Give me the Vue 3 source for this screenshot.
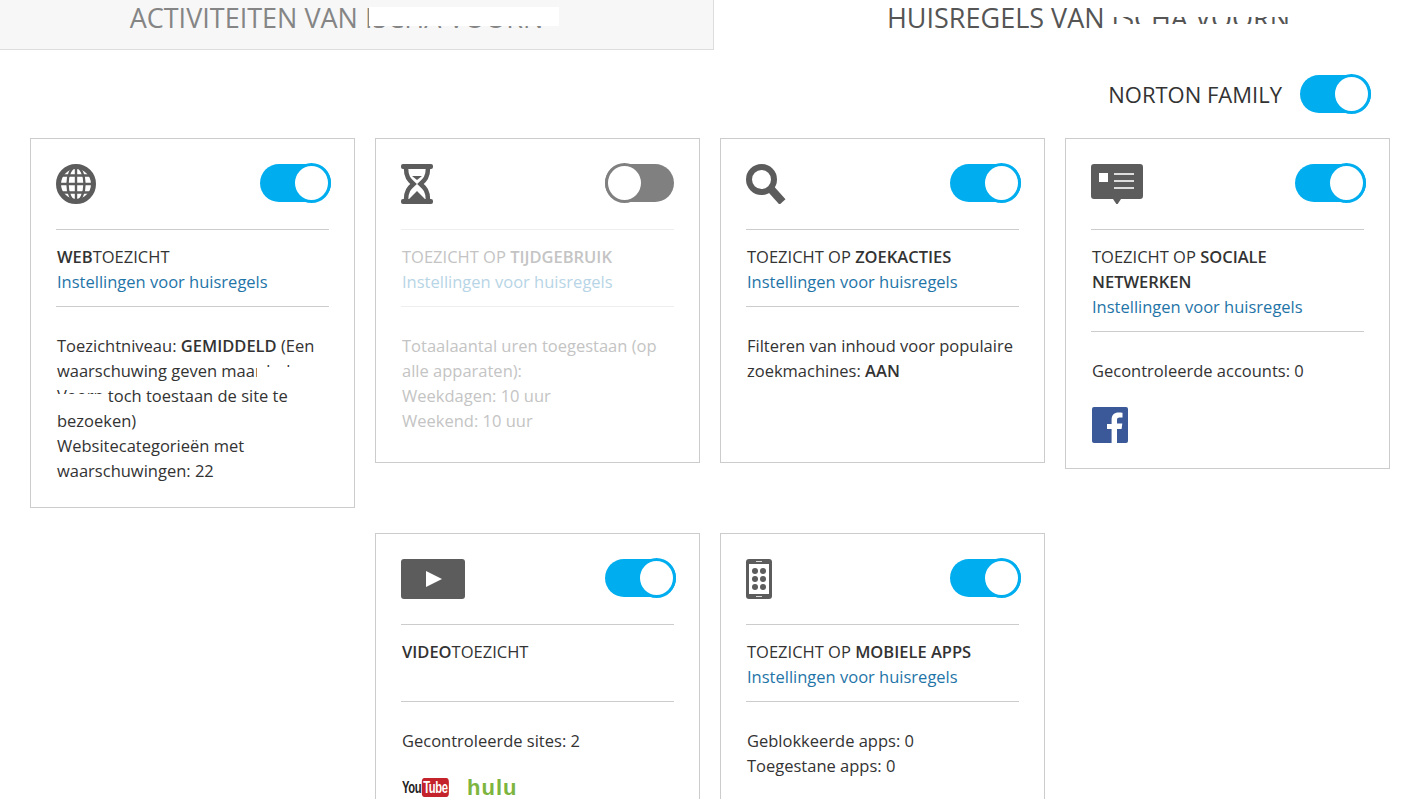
<template>
  <div class="page">
    <!-- Tabs -->
    <div class="tabs">
      <div class="tab tab-inactive">
        <span class="tab-label">
          ACTIVITEITEN VAN ISCHA VOORN
          <i class="blot blot-a"></i>
        </span>
      </div>
      <div class="tab tab-active">
        <span class="tab-label">
          HUISREGELS VAN ISCHA VOORN
          <i class="blot blot-b"></i>
          <i class="blot blot-c"></i>
        </span>
      </div>
    </div>

    <div class="master">
      <span class="master-label">NORTON FAMILY</span>
      <div class="toggle">
        <span class="knob"></span>
      </div>
    </div>

    <div class="cards">
      <!-- Webtoezicht -->
      <section class="card">
        <div class="card-head">
          <svg class="icon" width="40" height="40" viewBox="0 0 40 40" fill="none" stroke="#5c5c5c">
            <circle cx="20" cy="20" r="17.500" stroke-width="5" />
            <ellipse cx="20" cy="20" rx="8.500" ry="17" stroke-width="2.400" />
            <path d="M20 3v34M3 20h34M6 11.500h28M6 28.500h28" stroke-width="2.400" />
          </svg>
          <div class="toggle"><span class="knob"></span></div>
        </div>
        <div class="card-title">
          <div><b>WEB</b>TOEZICHT</div>
          <a class="card-link">Instellingen voor huisregels</a>
        </div>
        <div class="card-body">
          <div>Toezichtniveau: <b>GEMIDDELD</b> (Een waarschuwing geven maar Ischa Voorn toch toestaan de site te bezoeken)</div>
          <div>Websitecategorieën met waarschuwingen: 22</div>
          <i class="blot blot-d"></i>
          <i class="blot blot-e"></i>
        </div>
      </section>

      <!-- Tijdgebruik, staat uit -->
      <section class="card card-off">
        <div class="card-head">
          <svg class="icon" width="32" height="40" viewBox="0 0 32 40">
            <rect x="0" y="0" width="32" height="5" rx="2" fill="#5c5c5c" />
            <rect x="0" y="35" width="32" height="5" rx="2" fill="#5c5c5c" />
            <path d="M5 4c0 9 3 12 7.500 16C8 24 5 27 5 36M27 4c0 9-3 12-7.500 16C24 24 27 27 27 36" fill="none" stroke="#5c5c5c" stroke-width="4.500" />
            <path d="M11 12h10l-5 4zM7 36l9-9 9 9z" fill="#5c5c5c" />
          </svg>
          <div class="toggle toggle-off"><span class="knob"></span></div>
        </div>
        <div class="card-title">
          <div>TOEZICHT OP <b>TIJDGEBRUIK</b></div>
          <a class="card-link">Instellingen voor huisregels</a>
        </div>
        <div class="card-body">
          <div>Totaalaantal uren toegestaan (op alle apparaten):</div>
          <div>Weekdagen: 10 uur</div>
          <div>Weekend: 10 uur</div>
        </div>
      </section>

      <!-- Zoekacties -->
      <section class="card">
        <div class="card-head">
          <svg class="icon" width="40" height="40" viewBox="0 0 40 40" fill="none" stroke="#5c5c5c">
            <circle cx="15.500" cy="15.500" r="12.500" stroke-width="6" />
            <path d="M24 24l12.500 14" stroke-width="8" />
          </svg>
          <div class="toggle"><span class="knob"></span></div>
        </div>
        <div class="card-title">
          <div>TOEZICHT OP <b>ZOEKACTIES</b></div>
          <a class="card-link">Instellingen voor huisregels</a>
        </div>
        <div class="card-body">
          <div>Filteren van inhoud voor populaire zoekmachines: <b>AAN</b></div>
        </div>
      </section>

      <!-- Sociale netwerken -->
      <section class="card">
        <div class="card-head">
          <svg class="icon" width="52" height="40" viewBox="0 0 52 40">
            <path d="M3 0h46a3 3 0 0 1 3 3v29a3 3 0 0 1-3 3H30l-4 6-4-6H3a3 3 0 0 1-3-3V3a3 3 0 0 1 3-3z" fill="#5c5c5c" />
            <rect x="8" y="9" width="9" height="9" fill="#fff" />
            <path d="M23 10h20M23 17h20M23 24h20" stroke="#ddd" stroke-width="2" />
          </svg>
          <div class="toggle"><span class="knob"></span></div>
        </div>
        <div class="card-title">
          <div>TOEZICHT OP <b>SOCIALE NETWERKEN</b></div>
          <a class="card-link">Instellingen voor huisregels</a>
        </div>
        <div class="card-body">
          <div>Gecontroleerde accounts: 0</div>
          <div class="brand-row">
            <svg width="36" height="36" viewBox="0 0 36 36">
              <rect width="36" height="36" rx="2" fill="#3b5998" />
              <path d="M25 36V22h4.600l.7-5.400H25v-3.400c0-1.600.4-2.600 2.700-2.600h2.800V5.700c-.5-.1-2.200-.2-4-.2-4.100 0-6.900 2.500-6.900 7.100v4.400h-4.600V22h4.600v14z" fill="#fff" />
            </svg>
          </div>
        </div>
      </section>

      <!-- Video -->
      <section class="card card-col2">
        <div class="card-head">
          <svg class="icon" width="64" height="40" viewBox="0 0 64 40">
            <rect width="64" height="40" rx="3" fill="#5c5c5c" />
            <path d="M25 12l16 8-16 8z" fill="#fff" />
          </svg>
          <div class="toggle"><span class="knob"></span></div>
        </div>
        <div class="card-title">
          <div><b>VIDEO</b>TOEZICHT</div>
        </div>
        <div class="card-body">
          <div>Gecontroleerde sites: 2</div>
          <div class="brand-row brand-row-video">
            <span class="yt-box"><span class="yt">You<span class="yt-tube">Tube</span></span></span>
            <span class="hulu">hulu</span>
          </div>
        </div>
      </section>

      <!-- Mobiele apps -->
      <section class="card">
        <div class="card-head">
          <svg class="icon" width="26" height="40" viewBox="0 0 26 40">
            <rect width="26" height="40" rx="3" fill="#5c5c5c" />
            <rect x="3" y="5" width="20" height="30" fill="#fff" />
            <path d="M10 2.500h6M10 37.500h6" stroke="#ddd" stroke-width="1" />
            <g fill="#5c5c5c">
              <circle cx="9" cy="12" r="3" /><circle cx="17" cy="12" r="3" />
              <circle cx="9" cy="20" r="3" /><circle cx="17" cy="20" r="3" />
              <circle cx="9" cy="28" r="3" /><circle cx="17" cy="28" r="3" />
            </g>
          </svg>
          <div class="toggle"><span class="knob"></span></div>
        </div>
        <div class="card-title">
          <div>TOEZICHT OP <b>MOBIELE APPS</b></div>
          <a class="card-link">Instellingen voor huisregels</a>
        </div>
        <div class="card-body">
          <div>Geblokkeerde apps: 0</div>
          <div>Toegestane apps: 0</div>
        </div>
      </section>
    </div>
  </div>
</template>

<script setup>
</script>

<style>
html, body {
  background: #fff;
  overflow: hidden;
}
</style>

<style scoped>
.page {
  width: 1401px;
  height: 799px;
  overflow: hidden;
  font-family: "Open Sans", "Noto Sans", sans-serif;
  color: #333;
}

/* === Tabs === */
.tabs {
  display: flex;
  height: 50px;
}

.tab {
  box-sizing: border-box;
  height: 50px;
  text-align: center;
  font-size: 27px;
  line-height: 36px;
}

.tab-inactive {
  width: 714px;
  padding-right: 40px;
  background: #f7f7f7;
  border-right: 1px solid #ddd;
  border-bottom: 1px solid #ddd;
  color: #858585;
}

.tab-active {
  flex: 1;
  padding-left: 62px;
  color: #555;
}

.tab-label {
  position: relative;
  display: inline-block;
}

.blot {
  position: absolute;
  background: #fff;
}

.blot-a { left: 239px; top: 7px; width: 190px; height: 19px; }
.blot-b { left: 222px; top: 6px; width: 180px; height: 11px; }
.blot-c { left: 222px; top: 24px; width: 180px; height: 6px; }

/* === Master toggle === */
.master {
  display: flex;
  justify-content: flex-end;
  align-items: center;
  gap: 18px;
  margin-top: 24px;
  padding-right: 30px;
}

.master-label {
  font-size: 22px;
  color: #333;
}

.toggle {
  display: flex;
  justify-content: flex-end;
  align-items: center;
  flex: none;
  box-sizing: border-box;
  width: 71px;
  height: 38px;
  margin: 1px 0;
  border-radius: 19px;
  background: #00aeef;
}

.toggle-off {
  justify-content: flex-start;
  width: 69px;
  margin-right: 2px;
  background: #808080;
}

.knob {
  flex: none;
  box-sizing: border-box;
  width: 39px;
  height: 40px;
  border: 3px solid #00aeef;
  border-radius: 50%;
  background: #fff;
}

.toggle-off .knob {
  border-color: #808080;
}

/* === Cards === */
.cards {
  display: grid;
  grid-template-columns: repeat(4, 325px);
  column-gap: 20px;
  row-gap: 25px;
  align-items: start;
  margin-top: 24px;
  padding-left: 30px;
}

.card {
  box-sizing: border-box;
  min-height: 325px;
  padding: 24px 25px 24px;
  border: 1px solid #ccc;
  background: #fff;
  font-size: 16.500px;
  line-height: 25px;
}

.card-col2 {
  grid-column: 2;
}

.card-head {
  display: flex;
  justify-content: space-between;
  align-items: flex-start;
  margin-right: -2px;
  padding-bottom: 25px;
}

.icon {
  display: block;
  margin-top: 1px;
}

.card-title {
  min-height: 50px;
  padding: 14px 0 12px 1px;
  border-top: 1px solid #ccc;
  border-bottom: 1px solid #ccc;
}

.card-title b,
.card-body b {
  font-weight: 600;
}

.card-link {
  display: block;
  color: #1f75a8;
}

.card-body {
  position: relative;
  padding: 26px 0 0 1px;
}

.card-off .card-title,
.card-off .card-body {
  color: #c4c4c4;
  border-color: #eee;
}

.card-off .card-link {
  color: #b7d5e6;
}

.blot-d { left: 201px; top: 60px; width: 58px; height: 16px; }
.blot-e { left: 0; top: 87px; width: 51px; height: 12px; }

.brand-row {
  display: flex;
  align-items: center;
  margin-top: 24px;
  margin-bottom: 1px;
}

.brand-row svg {
  display: block;
}

.brand-row-video {
  gap: 18px;
  height: 20px;
}

.yt-box {
  display: block;
  flex: none;
  width: 47px;
  height: 20px;
  transform: translateY(-3px);
}

.yt {
  display: inline-block;
  font-family: "Liberation Sans", sans-serif;
  font-weight: 700;
  font-size: 17px;
  line-height: 20px;
  letter-spacing: -0.6px;
  white-space: nowrap;
  color: #222;
  transform: scaleX(0.66);
  transform-origin: left center;
}

.yt-tube {
  display: inline-block;
  margin-left: 1px;
  padding: 0 2px;
  border-radius: 4px;
  background: #c4232b;
  color: #fff;
  line-height: 19px;
}

.hulu {
  font-family: "Liberation Sans", sans-serif;
  font-weight: 700;
  font-size: 22px;
  line-height: 20px;
  letter-spacing: 1px;
  color: #7db53f;
  transform: translateY(1px);
}
</style>
